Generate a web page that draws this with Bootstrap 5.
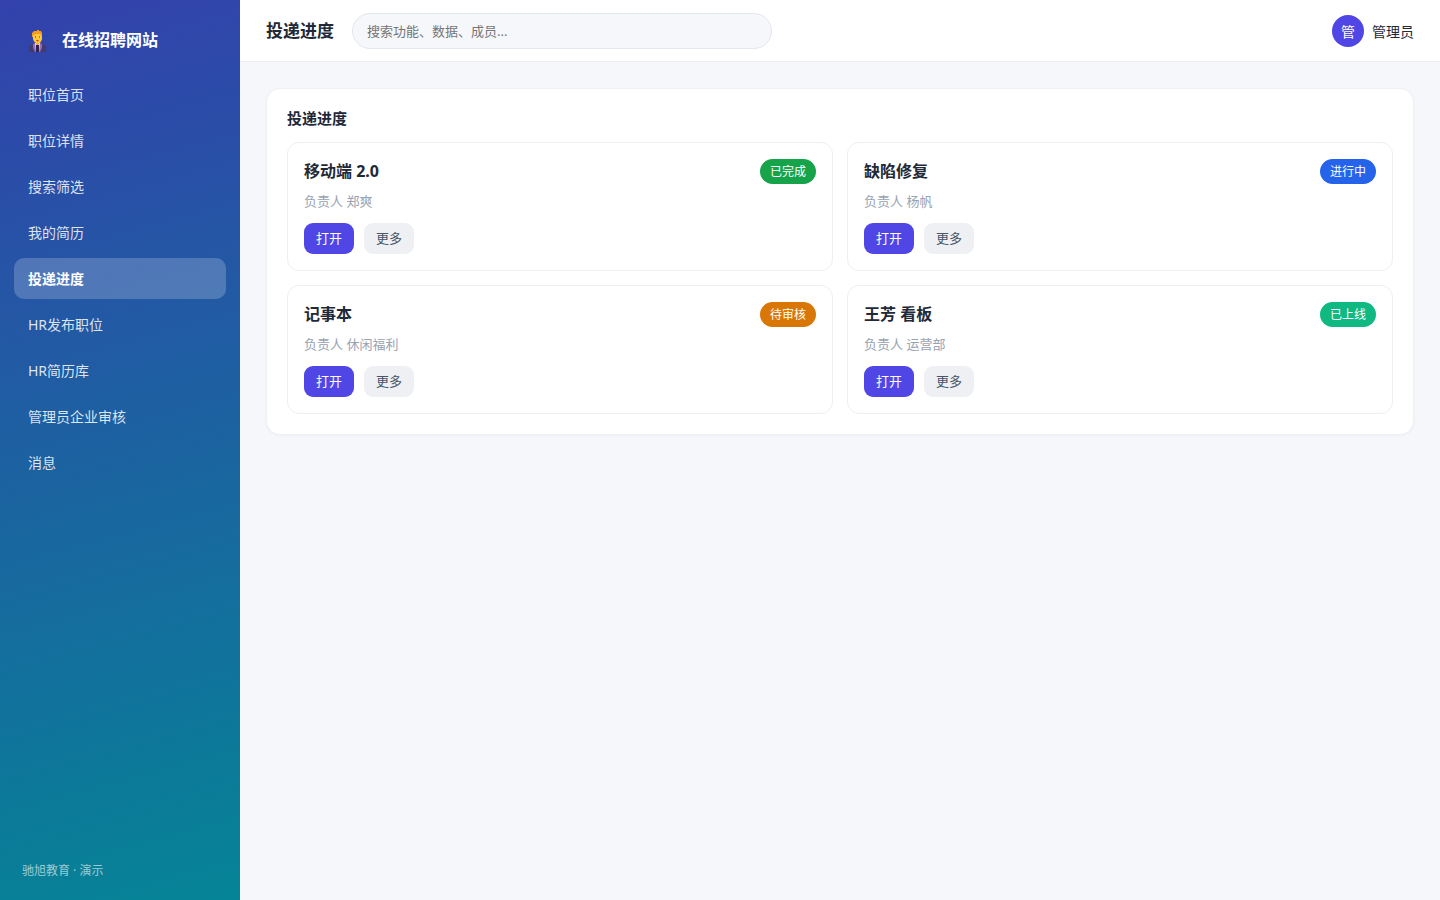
<!DOCTYPE html>
<html lang="zh-CN">
<head>
<meta charset="utf-8">
<meta name="viewport" content="width=device-width, initial-scale=1">
<title>在线招聘网站</title>
<link href="https://cdn.jsdelivr.net/npm/bootstrap@5.3.0/dist/css/bootstrap.min.css" rel="stylesheet">
<style>
  body { font-family: "Noto Sans", "Noto Sans CJK SC", sans-serif; font-size: 14px; line-height: 21px; color: #1f2937; background: #f5f7fb; }
  .sidebar { width: 240px; padding: 22px 14px 20px; background: linear-gradient(165deg, #3341ac, #058496); }
  .brand { font-size: 16px; line-height: 36px; gap: 14px; padding: 0 14px; margin-bottom: 16px; }
  .brand svg { width: 20px; height: 24px; }
  .side-nav { gap: 5px; }
  .side-nav .nav-link { color: rgba(255,255,255,.85); padding: 10px 14px; border-radius: 10px; }
  .side-nav .nav-link.active { color: #fff; font-weight: 700; background: rgba(255,255,255,.2); }
  .side-foot { font-size: 12px; line-height: 18px; padding: 0 8px; color: rgba(255,255,255,.6); }
  .topbar { background: #fff; padding: 13px 26px 12px; gap: 18px; border-bottom: 1px solid #eceef2; }
  .topbar h1 { font-size: 17px; line-height: 26px; }
  .search-box { width: 420px; height: 36px; font-size: 13px; padding: 0 14px; background: #f5f7fb; border-color: #e2e6ee; }
  .search-box::placeholder { color: #757575; }
  .avatar { width: 32px; height: 32px; background: #4f46e5; color: #fff; }
  .content-area { padding: 26px; }
  .panel { padding: 20px; border: 1px solid #eef0f3; border-radius: 14px; box-shadow: 0 1px 3px rgba(15,23,42,.04); }
  .panel h2 { font-size: 15px; line-height: 19px; margin-bottom: 14px; }
  .tiles { --bs-gutter-x: 14px; --bs-gutter-y: 14px; }
  .tile { padding: 16px; border: 1px solid #eeeff2; border-radius: 12px; }
  .tile h3 { font-size: 16px; line-height: 25px; }
  .tile p { font-size: 13px; line-height: 18px; color: #98a2b3; margin: 8px 0 13px; }
  .tile-actions { gap: 10px; }
  .state { font-size: 12px; line-height: 17px; padding: 4px 10px; font-weight: 400; color: #fff; }
  .state-done { background: #16a34a; }
  .state-doing { background: #2563eb; }
  .state-wait { background: #d97706; }
  .state-live { background: #10b981; }
  .tile .btn { font-size: 13px; line-height: 19px; padding: 6px 12px; border: 0; border-radius: 9px; }
  .btn-open { background: #4f46e5; color: #fff; }
  .btn-more { background: #eef0f4; color: #475569; }
  .btn-open:hover { background: #4338ca; color: #fff; }
  .btn-more:hover { background: #e2e8f0; }
</style>
</head>
<body>
<div class="d-flex min-vh-100">
  <aside class="sidebar d-flex flex-column flex-shrink-0">
    <div class="brand d-flex align-items-center text-white fw-bold">
      <svg viewBox="0 0 20 24" aria-hidden="true">
        <path d="M1 24v-4q0-3 3-4l3-1h5l3 1q3 1 3 4v4z" fill="#433a6b"/>
        <path d="M5 16l2-1 2 3h1l2-3 2 1v4l-2 4H7l-2-4z" fill="#8e6bbf"/>
        <path d="M7 15h5l-1 9H8z" fill="#e4dcef"/>
        <path d="M8 17h3v7H8z" fill="#302350"/>
        <path d="M8 13h3v3l-1 1H9l-1-1z" fill="#ef9b22"/>
        <path d="M5 6h9v5q-1 4-4 4.500Q6 15 5 11z" fill="#ffc83d"/>
        <path d="M4 9V5l2-2h3V2h2v1h2l1 2v4l-1-2-1-1H7L5 8v1z" fill="#f99b1c"/>
        <path d="M7 8.500h1v1H7zM11 8.500h1v1h-1z" fill="#533536"/>
        <path d="M8 12h3l-1 1.500H9z" fill="#d83b41"/>
      </svg>
      <span>在线招聘网站</span>
    </div>
    <nav class="side-nav nav flex-column" aria-label="主导航">
      <a class="nav-link" href="#">职位首页</a>
      <a class="nav-link" href="#">职位详情</a>
      <a class="nav-link" href="#">搜索筛选</a>
      <a class="nav-link" href="#">我的简历</a>
      <a class="nav-link active" href="#" aria-current="page">投递进度</a>
      <a class="nav-link" href="#">HR发布职位</a>
      <a class="nav-link" href="#">HR简历库</a>
      <a class="nav-link" href="#">管理员企业审核</a>
      <a class="nav-link" href="#">消息</a>
    </nav>
    <div class="side-foot mt-auto">驰旭教育 · 演示</div>
  </aside>
  <div class="flex-grow-1">
    <header class="topbar d-flex align-items-center">
      <h1 class="fw-bold mb-0">投递进度</h1>
      <input class="search-box form-control rounded-pill" type="search" placeholder="搜索功能、数据、成员..." aria-label="搜索">
      <div class="d-flex align-items-center gap-2 ms-auto">
        <span class="avatar rounded-circle d-flex align-items-center justify-content-center">管</span>
        <span>管理员</span>
      </div>
    </header>
    <main class="content-area">
      <section class="panel bg-white">
        <h2 class="fw-bold">投递进度</h2>
        <div class="tiles row row-cols-1 row-cols-lg-2">
          <div class="col"><article class="tile">
            <div class="d-flex justify-content-between align-items-center"><h3 class="fw-bold mb-0">移动端 2.0</h3><span class="state state-done rounded-pill">已完成</span></div>
            <p>负责人 郑爽</p>
            <div class="d-flex tile-actions"><button type="button" class="btn btn-open">打开</button><button type="button" class="btn btn-more">更多</button></div>
          </article></div>
          <div class="col"><article class="tile">
            <div class="d-flex justify-content-between align-items-center"><h3 class="fw-bold mb-0">缺陷修复</h3><span class="state state-doing rounded-pill">进行中</span></div>
            <p>负责人 杨帆</p>
            <div class="d-flex tile-actions"><button type="button" class="btn btn-open">打开</button><button type="button" class="btn btn-more">更多</button></div>
          </article></div>
          <div class="col"><article class="tile">
            <div class="d-flex justify-content-between align-items-center"><h3 class="fw-bold mb-0">记事本</h3><span class="state state-wait rounded-pill">待审核</span></div>
            <p>负责人 休闲福利</p>
            <div class="d-flex tile-actions"><button type="button" class="btn btn-open">打开</button><button type="button" class="btn btn-more">更多</button></div>
          </article></div>
          <div class="col"><article class="tile">
            <div class="d-flex justify-content-between align-items-center"><h3 class="fw-bold mb-0">王芳 看板</h3><span class="state state-live rounded-pill">已上线</span></div>
            <p>负责人 运营部</p>
            <div class="d-flex tile-actions"><button type="button" class="btn btn-open">打开</button><button type="button" class="btn btn-more">更多</button></div>
          </article></div>
        </div>
      </section>
    </main>
  </div>
</div>
<script src="https://cdn.jsdelivr.net/npm/bootstrap@5.3.0/dist/js/bootstrap.bundle.min.js"></script>
</body>
</html>
